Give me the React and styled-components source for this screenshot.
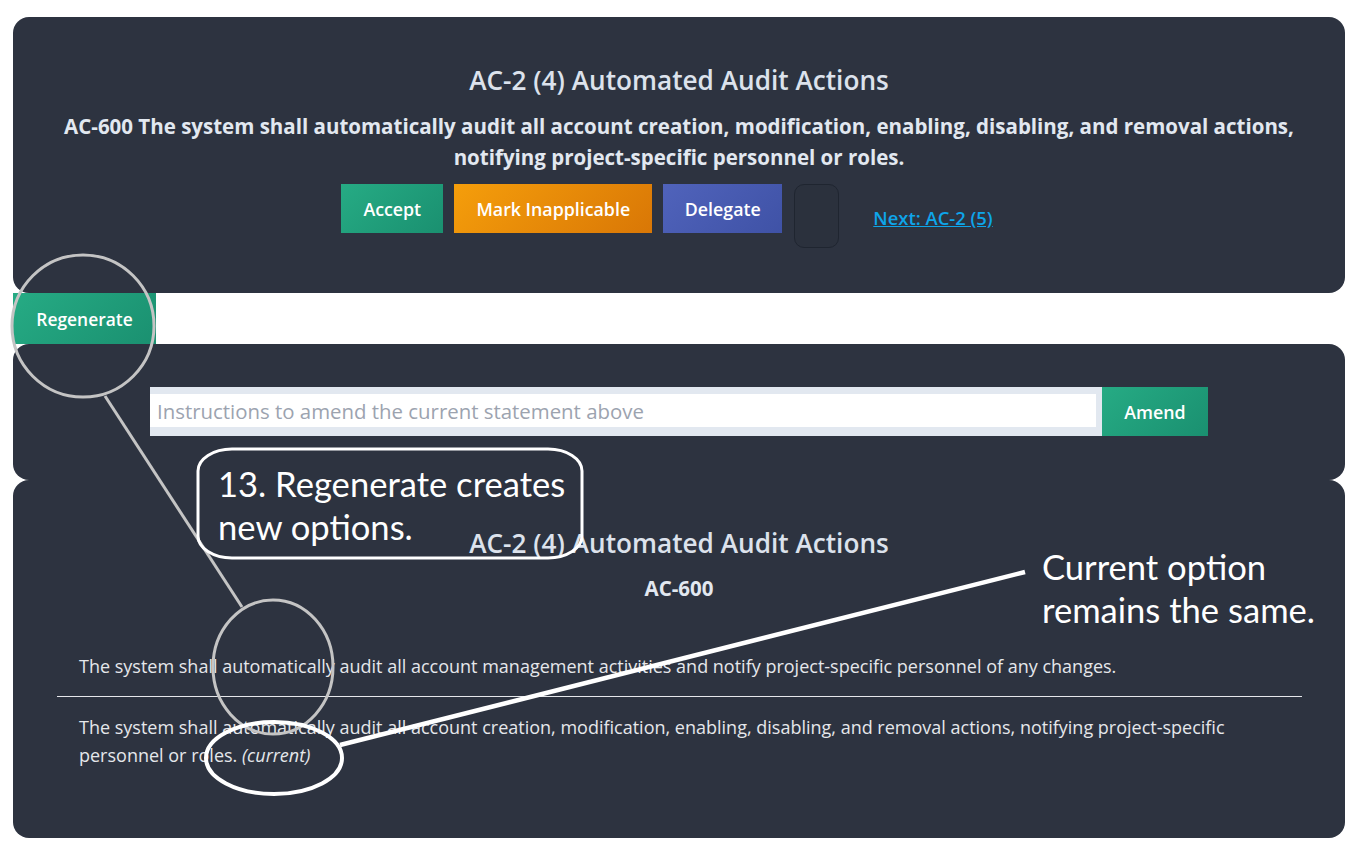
import styled, { createGlobalStyle } from "styled-components"

const GlobalStyle = createGlobalStyle`
  html, body {
    margin: 0;
    padding: 0;
    background: #ffffff;
    font-family: "Open Sans", "Noto Sans", sans-serif;
  }
  * { box-sizing: border-box; }
`

const Page = styled.div`
  position: relative;
  width: 1360px;
  min-height: 845px;
  padding: 17px 15px 0 13px;
  display: flex;
  flex-direction: column;
`

const Panel = styled.section`
  background: #2d3340;
  border-radius: 16px;
  padding: ${(p) => p.$pad};
  display: flex;
  flex-direction: column;
  align-items: center;
  height: ${(p) => p.$h}px;
`

const Title = styled.h2`
  margin: 0;
  font-size: 26.2px;
  line-height: 34px;
  font-weight: 600;
  color: #dce2ec;
  text-align: center;
`

const Statement = styled.p`
  margin: ${(p) => p.$mt}px 0 0;
  font-size: 20.5px;
  line-height: 31px;
  font-weight: 700;
  color: #e2e8f0;
  text-align: center;
  max-width: 1250px;
`

const ActionRow = styled.div`
  display: flex;
  align-items: flex-start;
  margin-top: 11px;
  margin-right: 24px;
`

const gradients = {
  green: "linear-gradient(135deg, #26ab84, #1a9070)",
  orange: "linear-gradient(135deg, #f59e0b, #d97706)",
  blue: "linear-gradient(135deg, #5063bb, #3f52a6)",
}

const ActionButton = styled.button`
  height: ${(p) => p.$h || 49}px;
  width: ${(p) => p.$w}px;
  margin-right: ${(p) => p.$mr || 0}px;
  border: none;
  border-radius: 0;
  background: ${(p) => gradients[p.$tone]};
  color: #ffffff;
  font-family: "Open Sans", sans-serif;
  font-size: ${(p) => p.$fs || 17.8}px;
  font-weight: 600;
  cursor: pointer;
  padding: 0;
`

const EmptyBox = styled.div`
  width: 45px;
  height: 64px;
  border: 1px solid #1f2530;
  border-radius: 10px;
  background: #2b313d;
`

const NextLink = styled.a`
  align-self: center;
  margin-left: 34px;
  margin-top: 2px;
  color: #0ea5e9;
  font-size: 18.4px;
  font-weight: 600;
  text-decoration: underline;
  cursor: pointer;
`

const RegenStrip = styled.div`
  display: flex;
  height: 51px;
`

const AmendRow = styled.div`
  display: flex;
  width: 1058px;
`

const InputWrap = styled.div`
  flex: 1;
  background: #e2e8f0;
  padding: 7px 6px 9px 0;
  display: flex;
`

const Input = styled.input`
  flex: 1;
  border: none;
  outline: none;
  height: 33px;
  padding: 0 7px;
  background: #ffffff;
  font-family: "Open Sans", sans-serif;
  font-size: 20.4px;
  color: #374151;
  &::placeholder { color: #9ca3af; }
`

const OptionList = styled.div`
  align-self: stretch;
  margin: 32px 43px 0 44px;
`

const Option = styled.div`
  padding: 16px 22px;
  font-size: 18px;
  line-height: 28px;
  color: #e5e7eb;
  border-bottom: ${(p) => (p.$divider ? "1px solid #e5e7eb" : "none")};
  & em { font-style: italic; }
`

const Overlay = styled.svg`
  position: absolute;
  left: 0;
  top: 0;
  width: 1360px;
  height: 845px;
  pointer-events: none;
`

const Note = styled.div`
  position: absolute;
  left: ${(p) => p.$x}px;
  top: ${(p) => p.$y}px;
  font-family: Lato, "Open Sans", sans-serif;
  font-size: 34.6px;
  line-height: 43px;
  color: #ffffff;
  white-space: nowrap;
  pointer-events: none;
`

export default function App() {
  return (
    <>
      <GlobalStyle />
      <Page>
        <Panel $pad="46px 0 0" $h={276}>
          <Title>AC-2 (4) Automated Audit Actions</Title>
          <Statement $mt={14}>
            AC-600 The system shall automatically audit all account creation, modification, enabling,
            disabling, and removal actions, notifying project-specific personnel or roles.
          </Statement>
          <ActionRow>
            <ActionButton $tone="green" $w={102} $mr={11}>Accept</ActionButton>
            <ActionButton $tone="orange" $w={198} $mr={11}>Mark Inapplicable</ActionButton>
            <ActionButton $tone="blue" $w={119} $mr={12}>Delegate</ActionButton>
            <EmptyBox />
            <NextLink>Next: AC-2 (5)</NextLink>
          </ActionRow>
        </Panel>

        <RegenStrip>
          <ActionButton $tone="green" $w={143} $h={51} $fs={17.4}>Regenerate</ActionButton>
        </RegenStrip>

        <Panel $pad="43px 0 0" $h={136}>
          <AmendRow>
            <InputWrap>
              <Input placeholder="Instructions to amend the current statement above" />
            </InputWrap>
            <ActionButton $tone="green" $w={106}>Amend</ActionButton>
          </AmendRow>
        </Panel>

        <Panel $pad="46px 0 0" $h={358}>
          <Title>AC-2 (4) Automated Audit Actions</Title>
          <Statement $mt={13}>AC-600</Statement>
          <OptionList>
            <Option $divider>
              The system shall automatically audit all account management activities and notify
              project-specific personnel of any changes.
            </Option>
            <Option>
              The system shall automatically audit all account creation, modification, enabling,
              disabling, and removal actions, notifying project-specific personnel or roles.{" "}
              <em>(current)</em>
            </Option>
          </OptionList>
        </Panel>

        <Overlay viewBox="0 0 1360 845">
          <ellipse cx="83" cy="326" rx="71" ry="71" fill="none" stroke="#c4c4c4" strokeWidth="3" />
          <line x1="105" y1="396" x2="242" y2="607" stroke="#c4c4c4" strokeWidth="3" />
          <ellipse cx="273" cy="667" rx="60" ry="67" fill="none" stroke="#c4c4c4" strokeWidth="3" />
          <rect x="198" y="449" width="384" height="109" rx="34" ry="22" fill="none" stroke="#ffffff" strokeWidth="3" />
          <ellipse cx="274" cy="758" rx="68" ry="36" fill="none" stroke="#ffffff" strokeWidth="4" />
          <line x1="340" y1="745" x2="1025" y2="572" stroke="#ffffff" strokeWidth="4.5" />
        </Overlay>
        <Note $x={218} $y={462}>13. Regenerate creates<br />new options.</Note>
        <Note $x={1042} $y={545}>Current option<br />remains the same.</Note>
      </Page>
    </>
  )
}
